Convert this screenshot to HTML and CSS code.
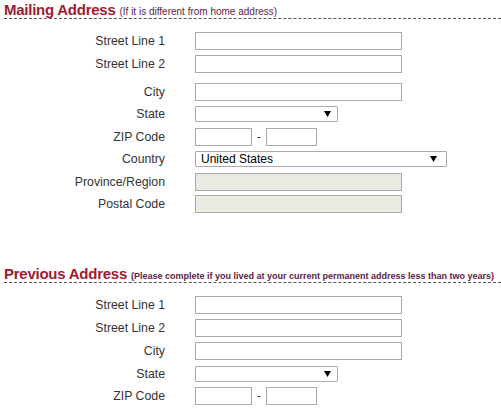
FILE: index.html
```html
<!DOCTYPE html>
<html>
<head>
<meta charset="utf-8">
<link rel="stylesheet" href="styles.css">
</head>
<body>
<div class="page">
  <section class="block">
    <h2 class="title">Mailing Address <span class="note">(If it is different from home address)</span></h2>
    <div class="form">
      <div class="row"><span class="label">Street Line 1</span><span class="input"></span></div>
      <div class="row"><span class="label">Street Line 2</span><span class="input"></span></div>
      <div class="row spaced"><span class="label">City</span><span class="input"></span></div>
      <div class="row"><span class="label">State</span><span class="select state"><span class="value"></span><svg class="arrow" width="7" height="6" viewBox="0 0 7 6"><polygon points="0,0 7,0 3.5,6" fill="#000"/></svg></span></div>
      <div class="row"><span class="label">ZIP Code</span><span class="zip"><span class="input zip1"></span><span class="dash">-</span><span class="input zip2"></span></span></div>
      <div class="row"><span class="label">Country</span><span class="select country"><span class="value">United States</span><svg class="arrow" width="7" height="6" viewBox="0 0 7 6"><polygon points="0,0 7,0 3.5,6" fill="#000"/></svg></span></div>
      <div class="row"><span class="label">Province/Region</span><span class="input disabled"></span></div>
      <div class="row"><span class="label">Postal Code</span><span class="input disabled"></span></div>
    </div>
  </section>
  <section class="block second">
    <h2 class="title">Previous Address <span class="note bold">(Please complete if you lived at your current permanent address less than two years)</span></h2>
    <div class="form">
      <div class="row"><span class="label">Street Line 1</span><span class="input"></span></div>
      <div class="row"><span class="label">Street Line 2</span><span class="input"></span></div>
      <div class="row"><span class="label">City</span><span class="input"></span></div>
      <div class="row"><span class="label">State</span><span class="select state"><span class="value"></span><svg class="arrow" width="7" height="6" viewBox="0 0 7 6"><polygon points="0,0 7,0 3.5,6" fill="#000"/></svg></span></div>
      <div class="row"><span class="label">ZIP Code</span><span class="zip"><span class="input zip1"></span><span class="dash">-</span><span class="input zip2"></span></span></div>
    </div>
  </section>
</div>
</body>
</html>
```
FILE: styles.css
```css
html, body {
  margin: 0;
  padding: 0;
  background: #fff;
}
body {
  font-family: "Liberation Sans", Arial, sans-serif;
  color: #333;
  overflow: hidden;
}
.page {
  padding-left: 4px;
}
.title {
  margin: 0;
  padding-top: 1px;
  height: 17px;
  line-height: 17px;
  font-size: 15px;
  letter-spacing: -0.25px;
  font-weight: bold;
  color: #9e1b32;
  border-bottom: 1px dashed #555;
  white-space: nowrap;
}
.note {
  font-size: 10px;
  font-weight: normal;
  letter-spacing: 0;
  color: #5e2148;
}
.note.bold {
  font-size: 9px;
  font-weight: bold;
  letter-spacing: 0;
}
.form {
  padding-top: 11px;
  display: flex;
  flex-direction: column;
}
.row {
  display: flex;
  align-items: center;
  height: 22.5px;
}
.second .row {
  height: 22.75px;
}
.row.spaced {
  margin-top: 5.5px;
}
.label {
  flex: none;
  width: 161px;
  margin-right: 30px;
  text-align: right;
  font-size: 12.3px;
  color: #333;
}
.input {
  display: block;
  flex: none;
  box-sizing: border-box;
  width: 207px;
  height: 18px;
  border: 1px solid #a9a9a9;
  background: #fff;
}
.input.disabled {
  background: #ebebe4;
}
.zip {
  display: flex;
  align-items: center;
}
.input.zip1 {
  width: 57px;
}
.input.zip2 {
  width: 51px;
}
.dash {
  width: 14px;
  text-align: center;
  font-size: 12px;
  color: #333;
}
.select {
  flex: none;
  box-sizing: border-box;
  height: 16px;
  border: 1px solid #a9a9a9;
  border-radius: 1px;
  background: #fff;
  display: flex;
  align-items: center;
  justify-content: space-between;
  padding: 0 6px 0 5px;
  font-size: 12px;
  color: #000;
}
.select.state {
  width: 143px;
}
.select.country {
  width: 252px;
  padding-right: 9px;
}
.arrow {
  display: block;
  flex: none;
}
.second {
  margin-top: 48.5px;
}
```
